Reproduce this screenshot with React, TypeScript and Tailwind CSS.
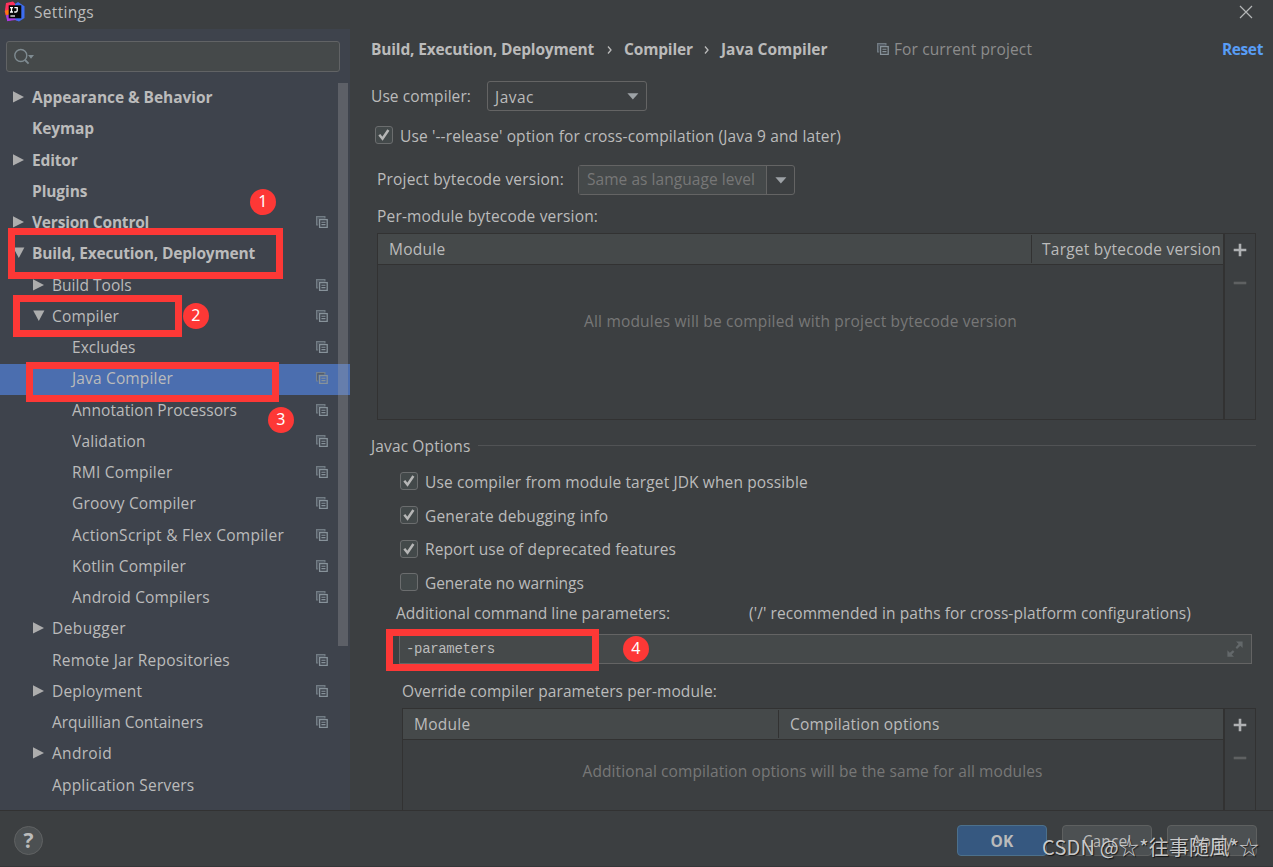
import React from "react";

type Row = {
  label: string;
  level: 0 | 1 | 2;
  arrow?: "right" | "down";
  bold?: boolean;
  copy?: boolean;
  selected?: boolean;
  tracking?: string;
};

const ROWS: Row[] = [
  { label: "Appearance & Behavior", level: 0, arrow: "right", bold: true, tracking: "tracking-[-0.05px]" },
  { label: "Keymap", level: 0, bold: true, tracking: "tracking-[-0.1px]" },
  { label: "Editor", level: 0, arrow: "right", bold: true, tracking: "tracking-[-0.15px]" },
  { label: "Plugins", level: 0, bold: true, tracking: "tracking-[-0.1px]" },
  { label: "Version Control", level: 0, arrow: "right", bold: true, copy: true, tracking: "tracking-[-0.21px]" },
  { label: "Build, Execution, Deployment", level: 0, arrow: "down", bold: true, tracking: "tracking-[-0.17px]" },
  { label: "Build Tools", level: 1, arrow: "right", copy: true, tracking: "tracking-[0.03px]" },
  { label: "Compiler", level: 1, arrow: "down", copy: true },
  { label: "Excludes", level: 2, copy: true, tracking: "tracking-[0.02px]" },
  { label: "Java Compiler", level: 2, copy: true, selected: true },
  { label: "Annotation Processors", level: 2, copy: true, tracking: "tracking-[0.07px]" },
  { label: "Validation", level: 2, copy: true },
  { label: "RMI Compiler", level: 2, copy: true, tracking: "tracking-[0.24px]" },
  { label: "Groovy Compiler", level: 2, copy: true },
  { label: "ActionScript & Flex Compiler", level: 2, copy: true, tracking: "tracking-[0.27px]" },
  { label: "Kotlin Compiler", level: 2, copy: true },
  { label: "Android Compilers", level: 2, copy: true },
  { label: "Debugger", level: 1, arrow: "right", tracking: "tracking-[0.4px]" },
  { label: "Remote Jar Repositories", level: 1, copy: true, tracking: "tracking-[0.22px]" },
  { label: "Deployment", level: 1, arrow: "right", copy: true },
  { label: "Arquillian Containers", level: 1, copy: true, tracking: "tracking-[-0.02px]" },
  { label: "Android", level: 1, arrow: "right", tracking: "tracking-[0.3px]" },
  { label: "Application Servers", level: 1, tracking: "tracking-[0.2px]" },
];

const INDENT = { 0: "pl-[12px]", 1: "pl-[32px]", 2: "pl-[52px]" };

function CopyIcon({ className = "" }: { className?: string }) {
  return (
    <svg className={`shrink-0 ${className}`} width="12" height="12" viewBox="0 0 12 12">
      <path d="M0 0H9.5V2.4H2.2V9.6H0Z" fill="#7b868e" fillOpacity=".85" />
      <path d="M1.3 1.3H8.3V2.4H2.2V8.4H1.3Z" fill="#4e5660" />
      <rect x="3.6" y="3.6" width="7.6" height="7.8" fill="none" stroke="#87929a" strokeWidth="1.3" />
      <path d="M5.4 6.2H9.5M5.4 8.6H9.5" stroke="#87929a" strokeWidth="1.1" />
    </svg>
  );
}

function TreeArrow({ dir }: { dir?: "right" | "down" }) {
  if (!dir) return <span className="w-[20px] shrink-0" />;
  return (
    <span className="flex w-[20px] shrink-0">
      <svg width="14" height="12" viewBox="0 0 14 12">
        {dir === "right" ? (
          <path d="M1 0.2L12 5.9L1 11.6Z" fill="#adadad" />
        ) : (
          <path d="M1.2 0.5H12.4L6.8 10.9Z" fill="#adadad" />
        )}
      </svg>
    </span>
  );
}

function Tree() {
  return (
    <div className="flex flex-1 flex-col overflow-hidden pt-[10.6px]">
      {ROWS.map((r) => (
        <div
          key={r.label}
          className={`flex h-[31.25px] w-[350px] shrink-0 items-center pb-[2.4px] pr-[22px] ${INDENT[r.level]} ${r.selected ? "bg-[#4b6eaf]" : ""}`}
        >
          <TreeArrow dir={r.arrow} />
          <span className={`flex-1 whitespace-nowrap ${r.bold ? "font-bold" : ""} ${r.tracking ?? "tracking-[0.16px]"}`}>
            {r.label}
          </span>
          {r.copy && <CopyIcon />}
        </div>
      ))}
    </div>
  );
}

function Caret() {
  return (
    <svg width="12" height="7" viewBox="0 0 12 7">
      <path d="M0.4 0.3H11.4L5.9 6.6Z" fill="#9da2a6" />
    </svg>
  );
}

function Check({ on = true }: { on?: boolean }) {
  return (
    <span className="flex size-[18px] shrink-0 items-center justify-center rounded-[3px] border border-[#6b6d6e] bg-[#43494a]">
      {on && (
        <svg width="14" height="14" viewBox="0 0 14 14">
          <path d="M2.3 6.8L5.5 10.7L11.4 2" fill="none" stroke="#b6b6b6" strokeWidth="2.5" />
        </svg>
      )}
    </span>
  );
}

function Toolbar() {
  return (
    <div className="flex w-[32px] shrink-0 flex-col items-center border-l-2 border-[#323232] pt-[9px]">
      <svg width="14" height="14" viewBox="0 0 14 14">
        <path d="M7 0.7V13.3M0.7 7H13.3" stroke="#afb1b3" strokeWidth="2.6" />
      </svg>
      <svg className="mt-[19px]" width="14" height="14" viewBox="0 0 14 14">
        <path d="M0.7 7H13.3" stroke="#5f6162" strokeWidth="2.6" />
      </svg>
    </div>
  );
}

function Badge({ n, className }: { n: number; className: string }) {
  return (
    <div
      className={`absolute flex size-[26px] items-center justify-center rounded-full bg-[#fd3836] pb-[3px] font-['Noto_Sans','Open_Sans',sans-serif] text-[16px] leading-none text-white ${className}`}
    >
      {n}
    </div>
  );
}

export default function App() {
  return (
    <div className="relative flex h-[867px] w-[1273px] flex-col overflow-hidden bg-[#3c3f41] font-['Open_Sans','Noto_Sans',sans-serif] text-[15.5px] leading-[20px] tracking-[0.13px] text-[#bbbbbb]">
      <header className="flex h-[29px] shrink-0 items-center pb-[5px] pl-[4px] pr-[20px]">
        <svg width="22" height="22" viewBox="0 0 22 22">
          <path d="M2 2L9 0.6L12.5 4L7 10L1.5 14.5L0.8 10.5Z" fill="#fe315d" />
          <path d="M0.8 10L6 8V14L3 15.8Z" fill="#f97a12" />
          <path d="M2.5 14L9 16L15 20.2L9.5 18.4L3.2 20.2Z" fill="#b832d6" />
          <path d="M11 3L14 1L20.5 5.2V17L15 20.4L9 18Z" fill="#3d6df0" />
          <path d="M2 14.5L9 12L12 19L3.2 20Z" fill="#a83ae0" />
          <rect x="4.7" y="4.3" width="12.6" height="13" fill="#070707" />
          <path d="M6 6.6H9M7.5 6.6V11M6 11H9M10.4 6.6H13.2V9.6Q13 11 11.8 11H10.2" fill="none" stroke="#fff" strokeWidth="1.3" />
          <path d="M6.4 15H11" stroke="#fff" strokeWidth="1.2" />
        </svg>
        <span className="ml-[8px] flex-1 tracking-[0.3px]">Settings</span>
        <svg width="14" height="14" viewBox="0 0 14 14">
          <path d="M1 1L13 13M13 1L1 13" stroke="#b4b6b7" strokeWidth="1.2" />
        </svg>
      </header>

      <div className="flex h-[781px] shrink-0">
        <aside className="relative flex w-[350px] shrink-0 flex-col bg-[#3e434c] pt-[12px]">
          <div className="ml-[6px] flex h-[31px] w-[334px] shrink-0 items-center rounded-[3px] border border-[#616365] bg-[#45494a] pl-[7px]">
            <svg width="22" height="18" viewBox="0 0 22 18">
              <circle cx="6.8" cy="7.5" r="6" fill="none" stroke="#7f8b91" strokeWidth="1.4" />
              <path d="M11 12L14.6 15.6" stroke="#7f8b91" strokeWidth="1.8" />
              <path d="M14 7H20L17 10.8Z" fill="#7f8b91" />
            </svg>
          </div>
          <Tree />
          <div className="absolute left-[338px] top-[54px] h-[563px] w-[10px] bg-[#a6a6a6]/30" />
        </aside>

        <main className="flex min-w-0 flex-1 flex-col overflow-hidden">
          <div className="flex h-[40px] shrink-0 items-center pl-[21px] pr-[10px] font-bold">
            <span className="w-[223px] whitespace-nowrap tracking-[-0.17px]">Build, Execution, Deployment</span>
            <svg className="mx-[13px] mt-px" width="5" height="8" viewBox="0 0 5 8"><path d="M1 0.5L4 4L1 7.5" fill="none" stroke="#bbb" strokeWidth="1.3" /></svg>
            <span className="-ml-px w-[68px] tracking-[-0.16px]">Compiler</span>
            <svg className="mx-[12px] mt-px" width="5" height="8" viewBox="0 0 5 8"><path d="M1 0.5L4 4L1 7.5" fill="none" stroke="#bbb" strokeWidth="1.3" /></svg>
            <span className="w-[108px] whitespace-nowrap tracking-[-0.03px]">Java Compiler</span>
            <CopyIcon className="ml-[48px]" />
            <span className="ml-[5px] flex-1 font-normal tracking-[0.12px] text-[#8c8c8c]">For current project</span>
            <span className="tracking-[-0.38px] text-[#589df6]">Reset</span>
          </div>

          <div className="mt-[12px] flex h-[31px] shrink-0 items-center pl-[21px]">
            <span className="w-[116px] pb-px tracking-[0.08px]">Use compiler:</span>
            <div className="mb-px flex h-[30px] w-[160px] items-center justify-between rounded-[3px] border border-[#646464] pl-[7px] pr-[7px]">
              <span className="pt-px tracking-[0.48px]">Javac</span>
              <Caret />
            </div>
          </div>

          <div className="mt-[13px] flex h-[20px] shrink-0 items-center pl-[25px]">
            <Check />
            <span className="ml-[7px] mt-[2px]">Use '--release' option for cross-compilation (Java 9 and later)</span>
          </div>

          <div className="mt-[20px] flex h-[30px] shrink-0 items-center pl-[27px]">
            <span className="w-[201px] pb-[2px] tracking-[0.2px]">Project bytecode version:</span>
            <div className="flex h-[30px] w-[217px] items-stretch rounded-[3px] border border-[#646464]">
              <div className="flex flex-1 items-center bg-[#45494a] pb-[2px] pl-[8px] tracking-[0.05px] text-[#777777]">Same as language level</div>
              <div className="flex w-[28px] items-center justify-center border-l border-[#646464]">
                <Caret />
              </div>
            </div>
          </div>

          <div className="mt-[11px] h-[20px] shrink-0 pl-[27px] tracking-[0.18px]">Per-module bytecode version:</div>

          <div className="ml-[27px] mt-[7px] flex h-[187px] w-[879px] shrink-0 border border-[#323232]">
            <div className="flex flex-1 flex-col">
              <div className="flex h-[31px] shrink-0 items-center border-b border-[#323232] bg-[#45494a]">
                <span className="flex-1 pl-[11px] tracking-[0.25px]">Module</span>
                <span className="flex h-[28px] w-[192px] items-center whitespace-nowrap border-l border-[#323232] pl-[10px] tracking-[0.24px]">
                  Target bytecode version
                </span>
              </div>
              <div className="pt-[46px] text-center tracking-[0.19px] text-[#777777]">
                All modules will be compiled with project bytecode version
              </div>
            </div>
            <Toolbar />
          </div>

          <div className="mt-[16px] flex h-[20px] shrink-0 items-center pl-[21px] pr-[17px]">
            <span className="w-[107px]">Javac Options</span>
            <span className="mb-px h-px flex-1 bg-[#515355]" />
          </div>

          <div className="mt-[15px] flex h-[20px] shrink-0 items-center pl-[50px]">
            <Check />
            <span className="ml-[7px] mt-[2px] tracking-[0.12px]">Use compiler from module target JDK when possible</span>
          </div>
          <div className="mt-[14px] flex h-[20px] shrink-0 items-center pl-[50px]">
            <Check />
            <span className="ml-[7px] mt-[2px] tracking-[0.18px]">Generate debugging info</span>
          </div>
          <div className="mt-[14px] flex h-[20px] shrink-0 items-center pl-[50px]">
            <Check />
            <span className="ml-[7px] tracking-[0.1px]">Report use of deprecated features</span>
          </div>
          <div className="mt-[13px] flex h-[20px] shrink-0 items-center pl-[50px]">
            <Check on={false} />
            <span className="ml-[7px] mt-[2px] tracking-[-0.06px]">Generate no warnings</span>
          </div>

          <div className="mt-[11px] flex h-[20px] shrink-0 pl-[46px]">
            <span className="w-[353px] tracking-[0.04px]">Additional command line parameters:</span>
            <span className="tracking-[0.09px]">('/' recommended in paths for cross-platform configurations)</span>
          </div>

          <div className="ml-[49px] mt-[11px] flex h-[30px] w-[853px] shrink-0 items-center justify-between border border-[#646464] bg-[#45494a] pl-[6px] pr-[8px]">
            <span className="font-['Liberation_Mono',monospace] text-[14px] tracking-[-0.33px]">-parameters</span>
            <svg width="16" height="16" viewBox="0 0 16 16">
              <path d="M9 0.4H15.6V7L13.3 4.7L10 8L8.6 6.6L11.6 3Z" fill="#63686a" />
              <path d="M0.4 9.2V15.8H7L4.7 13.4L7.4 10.7L5.9 9.2L2.8 11.8Z" fill="#63686a" />
            </svg>
          </div>

          <div className="mt-[17px] h-[20px] shrink-0 pl-[52px] tracking-[0.08px]">Override compiler parameters per-module:</div>

          <div className="ml-[52px] mt-[7px] flex h-[120px] w-[854px] shrink-0 border border-[#323232]">
            <div className="flex flex-1 flex-col">
              <div className="flex h-[31px] shrink-0 items-center border-b border-[#323232] bg-[#45494a]">
                <span className="w-[375px] pl-[11px] tracking-[0.25px]">Module</span>
                <span className="flex h-[28px] flex-1 items-center border-l border-[#323232] pl-[11px] tracking-[0.18px]">Compilation options</span>
              </div>
              <div className="pr-px pt-[21px] text-center tracking-[0.09px] text-[#777777]">
                Additional compilation options will be the same for all modules
              </div>
            </div>
            <Toolbar />
          </div>
        </main>
      </div>

      <footer className="flex h-[57px] shrink-0 items-start border-b border-t border-b-[#343638] border-t-[#323232] pl-[14px] pr-[16px] pt-[14px]">
        <div className="mt-px flex size-[29px] items-center justify-center rounded-full border border-[#606263] bg-[#4c5052] text-[21px] font-bold leading-none">
          ?
        </div>
        <div className="ml-auto flex gap-[15px]">
          <div className="flex h-[31px] w-[90px] items-center justify-center rounded-[4px] border border-[#4c708c] bg-[#365880] pt-px font-bold">OK</div>
          <div className="flex h-[31px] w-[90px] items-center justify-center rounded-[4px] border border-[#5e6060] bg-[#4c5052] pt-px">Cancel</div>
          <div className="flex h-[31px] w-[90px] items-center justify-center rounded-[4px] border border-[#5e6060] bg-[#4c5052] pt-px">Apply</div>
        </div>
      </footer>

      <div className="absolute left-[8px] top-[228px] h-[51px] w-[275px] border-[7px] border-[#fd3836]" />
      <div className="absolute left-[13px] top-[295px] h-[42px] w-[169px] border-[7px] border-[#fd3836]" />
      <div className="absolute left-[26px] top-[362px] h-[40px] w-[253px] border-[7px] border-[#fd3836]" />
      <div className="absolute left-[386px] top-[629px] h-[42px] w-[213px] border-[7px] border-[#fd3836]" />
      <Badge n={1} className="left-[250px] top-[189px]" />
      <Badge n={2} className="left-[183px] top-[303px]" />
      <Badge n={3} className="left-[268px] top-[407px]" />
      <Badge n={4} className="left-[623px] top-[636px]" />

      <div className="absolute left-[1042px] top-[834px] whitespace-nowrap font-['Noto_Sans_CJK_SC',sans-serif] text-[20px] leading-[26px] tracking-[0.2px] text-[#dcdcdc]/90 [text-shadow:1px_1px_1px_rgba(0,0,0,0.7)]">
        CSDN @☆*往事随風*☆
      </div>
    </div>
  );
}
